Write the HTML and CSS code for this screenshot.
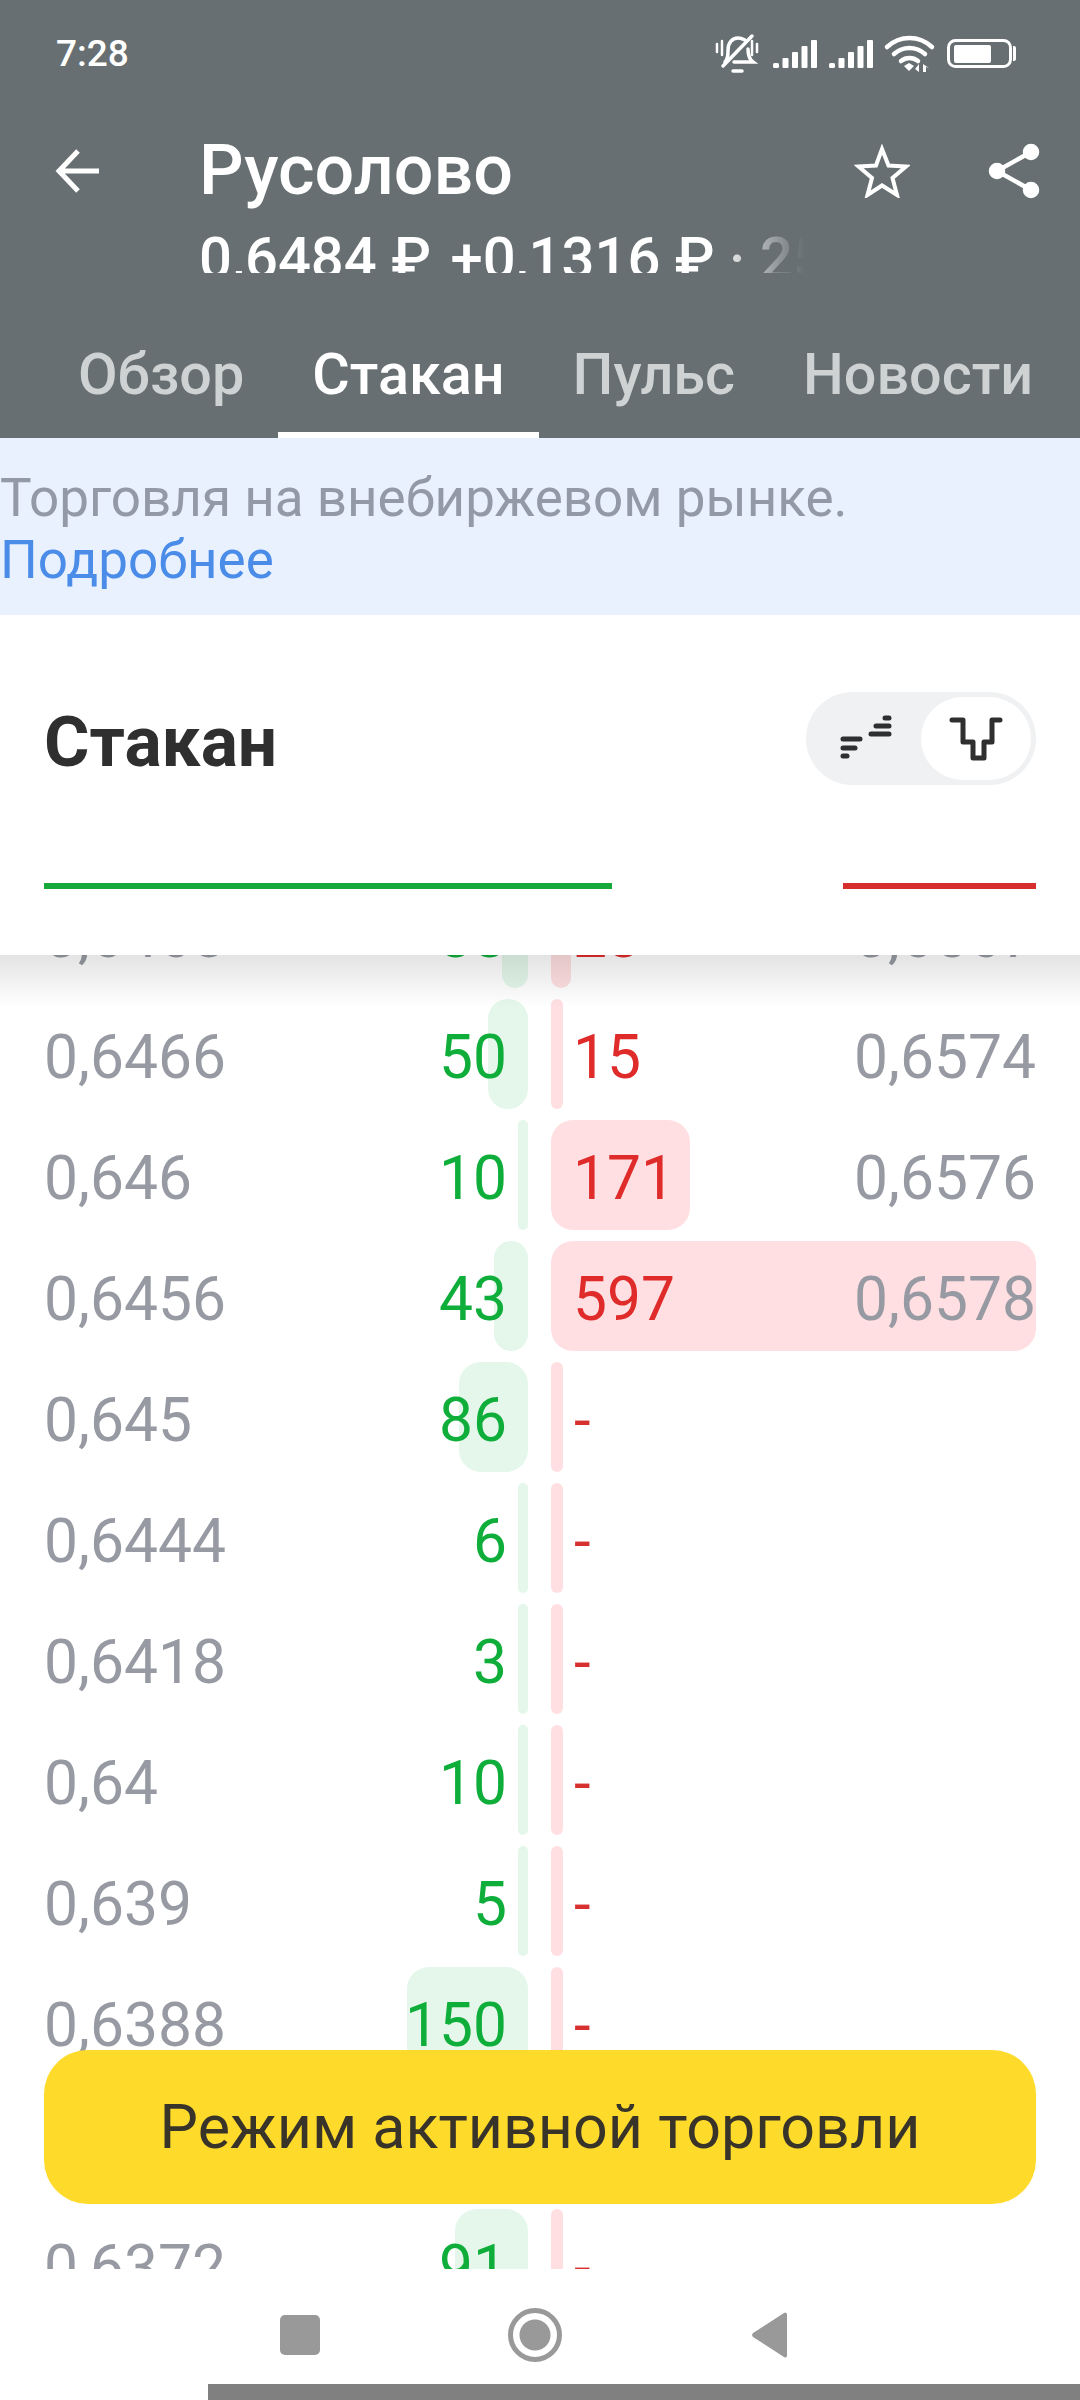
FILE: index.html
```html
<!DOCTYPE html>
<html lang="ru">
<head>
    <meta charset="UTF-8">
    <meta name="viewport" content="width=device-width, initial-scale=1.0">
    <title>Русолово</title>
    <link rel="stylesheet" href="styles.css">
</head>
<body>
    <header class="top">
        <div class="status">
            <span class="time">7:28</span>
            <svg class="status-icons" width="301" height="45" viewBox="0 0 301 45">
                <!-- muted bell -->
                <g fill="none" stroke="#fff" stroke-linecap="round">
                    <path d="M2 14v8M7 11v14M37 11v14M42 14v8" stroke-width="2.5"/>
                    <path d="M10 32c3-3 3-7 3-12 0-7 4-12 10-12 3 0 5 1 7 2M33 19c0 6 1 10 5 13H19" stroke-width="3.500"/>
                    <path d="M8 36L37 6" stroke-width="3.500"/>
                    <path d="M18 41h9" stroke-width="3.500"/>
                </g>
                <!-- signal -->
                <g fill="#fff">
                    <rect x="58" y="33" width="6" height="5" rx="1.500"/>
                    <rect x="67.500" y="28" width="6" height="10" rx="1"/>
                    <rect x="77" y="22" width="6" height="16" rx="1"/>
                    <rect x="86.500" y="16" width="6" height="22" rx="1"/>
                    <rect x="96" y="10" width="6" height="28" rx="1"/>
                    <rect x="114" y="33" width="6" height="5" rx="1.500"/>
                    <rect x="123.500" y="28" width="6" height="10" rx="1"/>
                    <rect x="133" y="22" width="6" height="16" rx="1"/>
                    <rect x="142.500" y="16" width="6" height="22" rx="1"/>
                    <rect x="152" y="10" width="6" height="28" rx="1"/>
                </g>
                <!-- wifi -->
                <g fill="none" stroke="#fff" stroke-width="4.500" stroke-linecap="round">
                    <path d="M172 17c13-12 32-12 45 0M179 24c9-8 22-8 31 0M186 31c5-4 12-4 17 0"/>
                </g>
                <path d="M189 36l5-3 5 3-5 5zM204 42v-8l-4 5zM208 34v8h3v-5l3 1z" fill="#fff"/>
                <!-- battery -->
                <rect x="233.500" y="10.500" width="62" height="26" rx="7" fill="none" stroke="#fff" stroke-width="3"/>
                <rect x="239" y="15" width="37" height="18" rx="2" fill="#fff"/>
                <path d="M298 16h1a2 2 0 0 1 2 2v11a2 2 0 0 1-2 2h-1z" fill="#fff"/>
            </svg>
        </div>
        <div class="title-bar">
            <svg class="back" width="46" height="46" viewBox="0 0 46 46" fill="none" stroke="#fff" stroke-width="5">
                <path d="M45 23H5M24 3L5 23l19 20"/>
            </svg>
            <div class="title-text">
                <h1>Русолово</h1>
                <div class="sub-clip">
                    <p class="sub">0,6484 ₽ <span class="change">+0,1316 ₽ · 25,47%</span></p>
                </div>
            </div>
            <svg class="star" width="56" height="54" viewBox="0 0 56 54" fill="none" stroke="#fff" stroke-width="4">
                <path d="M28 5l6.500 16.500 17.500 1-13.500 11.500 4.500 17L28 41.500 13.500 51l4.500-17L4.500 22.500l17.500-1z"/>
            </svg>
            <svg class="share" width="52" height="56" viewBox="0 0 52 56" fill="#fff" stroke="#fff" stroke-width="4.500">
                <path d="M43 9L9 28l34 19" fill="none"/>
                <circle cx="43" cy="9" r="6"/>
                <circle cx="9" cy="28" r="6"/>
                <circle cx="43" cy="47" r="6"/>
            </svg>
        </div>
        <nav class="tabs">
            <a class="tab">Обзор</a>
            <a class="tab active">Стакан</a>
            <a class="tab">Пульс</a>
            <a class="tab">Новости</a>
        </nav>
    </header>

    <div class="notice">
        Торговля на внебиржевом рынке.<br>
        <a class="notice-link">Подробнее</a>
    </div>

    <section class="book-head">
        <div class="book-title">
            <h2>Стакан</h2>
            <div class="toggle">
                <span class="toggle-item">
                    <svg width="52" height="52" viewBox="0 0 52 52" fill="none" stroke="#2f2f2f" stroke-width="5" stroke-linecap="round">
                        <path d="M3 26h17M3 35h12M3 43h4M31 21h18M36 13h13M45 5h4"/>
                    </svg>
                </span>
                <span class="toggle-item selected">
                    <svg width="54" height="44" viewBox="0 0 54 44" fill="none" stroke="#2f2f2f" stroke-width="5" stroke-linecap="round" stroke-linejoin="round">
                        <path d="M3 3h11v22h10v16h11V25h8V3h8"/>
                    </svg>
                </span>
            </div>
        </div>
        <div class="ratio">
            <span class="ratio-bid"></span>
            <span class="ratio-ask"></span>
        </div>
    </section>

    <main class="book">
        <div class="book-shadow"></div>
        <div class="rows">
            <div class="row">
                <div class="bid"><span class="price">0,6468</span><span class="qty">33</span><i class="bar" style="width:26px"></i></div>
                <div class="ask"><i class="bar" style="width:20px"></i><span class="qty">23</span><span class="price">0,6567</span></div>
            </div>
            <div class="row">
                <div class="bid"><span class="price">0,6466</span><span class="qty">50</span><i class="bar" style="width:40px"></i></div>
                <div class="ask"><i class="bar" style="width:12px"></i><span class="qty">15</span><span class="price">0,6574</span></div>
            </div>
            <div class="row">
                <div class="bid"><span class="price">0,646</span><span class="qty">10</span><i class="bar" style="width:10px"></i></div>
                <div class="ask"><i class="bar" style="width:139px"></i><span class="qty">171</span><span class="price">0,6576</span></div>
            </div>
            <div class="row">
                <div class="bid"><span class="price">0,6456</span><span class="qty">43</span><i class="bar" style="width:34px"></i></div>
                <div class="ask"><i class="bar" style="width:485px"></i><span class="qty">597</span><span class="price">0,6578</span></div>
            </div>
            <div class="row">
                <div class="bid"><span class="price">0,645</span><span class="qty">86</span><i class="bar" style="width:69px"></i></div>
                <div class="ask"><i class="bar" style="width:12px"></i><span class="dash">-</span></div>
            </div>
            <div class="row">
                <div class="bid"><span class="price">0,6444</span><span class="qty">6</span><i class="bar" style="width:10px"></i></div>
                <div class="ask"><i class="bar" style="width:12px"></i><span class="dash">-</span></div>
            </div>
            <div class="row">
                <div class="bid"><span class="price">0,6418</span><span class="qty">3</span><i class="bar" style="width:10px"></i></div>
                <div class="ask"><i class="bar" style="width:12px"></i><span class="dash">-</span></div>
            </div>
            <div class="row">
                <div class="bid"><span class="price">0,64</span><span class="qty">10</span><i class="bar" style="width:10px"></i></div>
                <div class="ask"><i class="bar" style="width:12px"></i><span class="dash">-</span></div>
            </div>
            <div class="row">
                <div class="bid"><span class="price">0,639</span><span class="qty">5</span><i class="bar" style="width:10px"></i></div>
                <div class="ask"><i class="bar" style="width:12px"></i><span class="dash">-</span></div>
            </div>
            <div class="row">
                <div class="bid"><span class="price">0,6388</span><span class="qty">150</span><i class="bar" style="width:121px"></i></div>
                <div class="ask"><i class="bar" style="width:12px"></i><span class="dash">-</span></div>
            </div>
            <!-- this row sits under the button -->
            <div class="row"></div>
            <div class="row">
                <div class="bid"><span class="price">0,6372</span><span class="qty">91</span><i class="bar" style="width:73px"></i></div>
                <div class="ask"><i class="bar" style="width:12px"></i><span class="dash">-</span></div>
            </div>
        </div>
        <button class="trade-btn">Режим активной торговли</button>
    </main>

    <footer class="nav">
        <div class="nav-icons">
            <span class="nav-square"></span>
            <span class="nav-circle"></span>
            <svg width="38" height="46" viewBox="0 0 38 46"><path d="M36 2v42a2 2 0 0 1-3 1L2 25a3 3 0 0 1 0-4L33 1a2 2 0 0 1 3 1z" fill="#999"/></svg>
        </div>
        <div class="nav-strip"></div>
    </footer>
</body>
</html>
```

FILE: styles.css
```css
* {
    box-sizing: border-box;
}

body {
    font-family: Roboto, "Noto Sans", sans-serif;
    margin: 0;
    width: 1080px;
    height: 2400px;
    overflow: hidden;
    display: flex;
    flex-direction: column;
    background-color: #fff;
}

/* header */
.top {
    height: 438px;
    background-color: #676f72;
    color: #fff;
    flex: none;
}

.status {
    height: 108px;
    padding: 30px 64px 0 56px;
    display: flex;
    justify-content: space-between;
    align-items: flex-start;
}

.time {
    margin-top: 4px;
    font-size: 37px;
    line-height: 40px;
    font-weight: 500;
}

.title-bar {
    height: 196px;
    display: flex;
    align-items: flex-start;
}

.back {
    margin: 40px 0 0 54px;
}

.title-text {
    width: 621px;
    margin: 26px 0 0 99px;
}

h1 {
    margin: 0;
    font-size: 70px;
    line-height: 72px;
    font-weight: 500;
}

.sub-clip {
    height: 51px;
    margin-top: 16px;
    overflow: hidden;
    -webkit-mask-image: linear-gradient(90deg, #000 84%, transparent 99%);
    mask-image: linear-gradient(90deg, #000 84%, transparent 99%);
    width: 612px;
}

.sub {
    margin: 0;
    font-size: 58px;
    line-height: 72px;
    font-weight: 500;
    white-space: nowrap;
}

.change {
    margin-left: 5px;
}

.star {
    margin: 36px 0 0 34px;
}

.share {
    margin: 35px 0 0 78px;
}

.tabs {
    height: 134px;
    display: flex;
    padding-left: 44px;
}

.tab {
    padding: 0 34px;
    height: 134px;
    line-height: 142px;
    font-size: 57.5px;
    font-weight: 500;
    color: #ced2d3;
    white-space: nowrap;
    border-bottom: 6px solid transparent;
}

.tab.active {
    color: #fff;
    border-bottom-color: #fff;
}

/* banner */
.notice {
    height: 177px;
    flex: none;
    padding-top: 29px;
    font-size: 53px;
    line-height: 62px;
    background-color: #e9f1fe;
    color: #9399a6;
}

.notice-link {
    color: #4a8ce8;
}

/* order book head */
.book-head {
    height: 340px;
    flex: none;
    padding: 77px 44px 0;
    background-color: #fff;
    position: relative;
    z-index: 2;
}

.book-title {
    display: flex;
    justify-content: space-between;
    align-items: center;
    height: 93px;
}

h2 {
    margin: 8px 0 0;
    font-size: 69.5px;
    line-height: 72px;
    font-weight: 700;
    color: #2f2f2f;
}

.toggle {
    width: 230px;
    height: 93px;
    padding: 5px;
    border-radius: 47px;
    background-color: #eff1f2;
    display: flex;
    justify-content: space-between;
}

.toggle-item {
    width: 111px;
    height: 83px;
    border-radius: 42px;
    display: flex;
    align-items: center;
    justify-content: center;
}

.toggle-item.selected {
    background-color: #fff;
}

.ratio {
    margin-top: 98px;
    height: 6px;
    display: flex;
    justify-content: space-between;
}

.ratio-bid {
    width: 568px;
    background-color: #17a83c;
}

.ratio-ask {
    width: 193px;
    background-color: #d62d2d;
}

/* rows */
.book {
    flex: none;
    height: 1314px;
    position: relative;
    overflow: hidden;
}

.book-shadow {
    position: absolute;
    top: 0;
    left: 0;
    right: 0;
    height: 52px;
    z-index: 2;
    background: linear-gradient(180deg, rgba(0, 0, 0, 0.11), rgba(0, 0, 0, 0));
}

.rows {
    margin-top: -77px;
    padding: 0 44px;
    display: flex;
    flex-direction: column;
    gap: 11px;
}

.row {
    height: 110px;
    flex: none;
    display: grid;
    grid-template-columns: 484px 485px;
    grid-template-rows: 110px;
    column-gap: 23px;
    font-size: 60.5px;
    line-height: 118px;
}

.bid, .ask {
    position: relative;
    display: flex;
    justify-content: space-between;
    z-index: 0;
}

.bar {
    position: absolute;
    top: 0;
    bottom: 0;
    z-index: -1;
    border-radius: 22px;
}

.bid .bar {
    right: 0;
    background-color: #e4f7ea;
}

.ask .bar {
    left: 0;
    background-color: #ffdfe1;
}

.price {
    color: #979aa2;
}

.bid .qty {
    color: #0fae3b;
    margin-right: 21px;
}

.ask .qty {
    color: #e02b2b;
    margin-left: 22px;
}

.dash {
    color: #d6302f;
    margin-left: 23px;
    font-size: 60px;
}

.trade-btn {
    position: absolute;
    left: 44px;
    top: 1095px;
    width: 992px;
    height: 154px;
    border: none;
    border-radius: 44px;
    background-color: #fedb2b;
    color: #38342a;
    font-family: inherit;
    font-size: 61px;
    z-index: 3;
}

/* android nav */
.nav {
    flex: 1;
    display: flex;
    flex-direction: column;
    justify-content: space-between;
}

.nav-icons {
    display: flex;
    align-items: center;
    padding: 39px 0 0 280px;
    gap: 189px;
}

.nav-square {
    width: 40px;
    height: 40px;
    border-radius: 5px;
    background-color: #999;
}

.nav-circle {
    width: 54px;
    height: 54px;
    border-radius: 50%;
    border: 5px solid #999;
    background: radial-gradient(circle, #999 15px, #fff 16px);
    margin-left: -1px;
}

.nav-strip {
    height: 16px;
    margin-left: 208px;
    background-color: #808080;
}
```
